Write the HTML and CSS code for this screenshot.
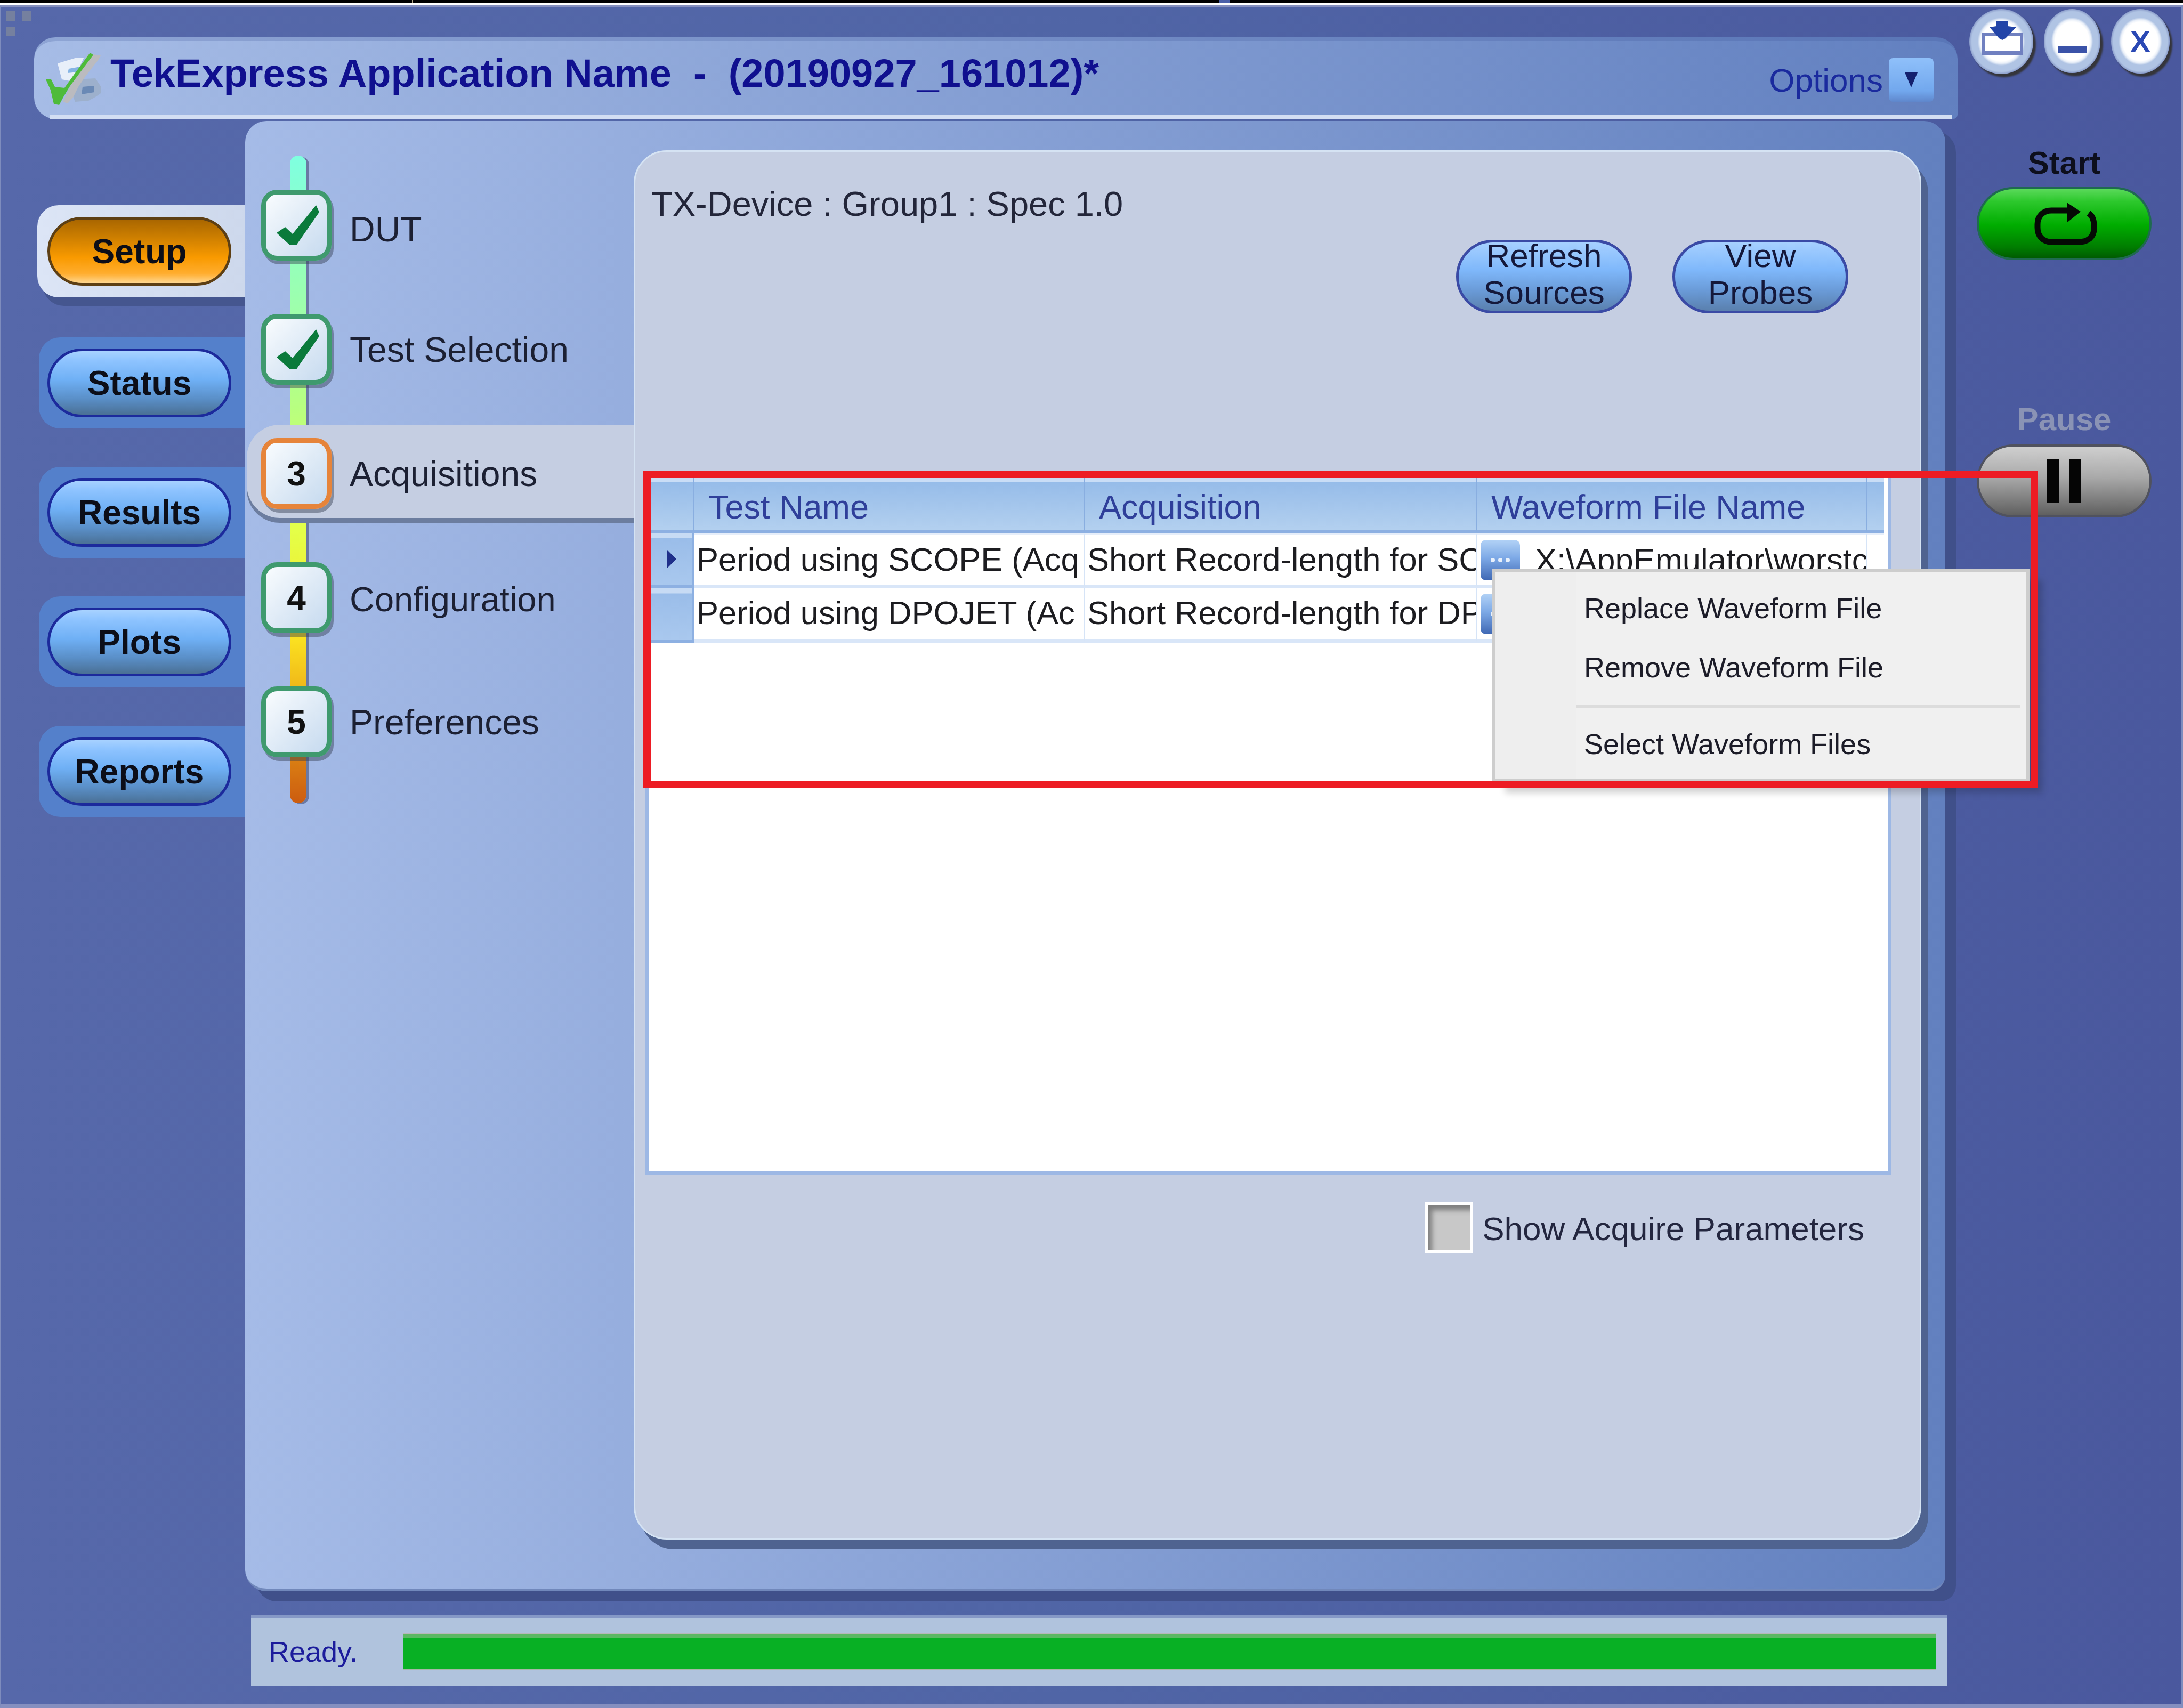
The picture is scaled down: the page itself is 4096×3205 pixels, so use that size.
FILE: index.html
```html
<!DOCTYPE html>
<html lang="en">
<head>
<meta charset="utf-8">
<title>TekExpress Application Name</title>
<link rel="stylesheet" href="styles.css">
</head>
<body>
<div class="topline">
  <span class="seg seg-a"></span><span class="tick"></span><span class="seg seg-b"></span><span class="gap"></span><span class="seg seg-c"></span>
</div>
<div class="window">
  <svg class="sysmark" viewBox="0 0 46 46"><rect x="0" y="0" width="17" height="18"/><rect x="29" y="0" width="17" height="18"/><rect x="0" y="29" width="17" height="18"/></svg>
  <div class="main">
    <header class="titlebar">
      <svg class="logo" viewBox="0 0 110 106">
        <path class="logo-sheet" d="M27 22 L60 12 L76 12 L56 56 L35 52Z"/>
        <path class="logo-accent" d="M48 32 L70 28 L66 38 L46 40Z"/>
        <path class="logo-blob" d="M62 52 L98 50 L108 65 L108 78 L98 85 L85 92 L60 94 L54 78Z"/>
        <path class="logo-dark" d="M74 66 L95 64 L96 76 L72 80Z"/>
        <path class="logo-gray" d="M85 4 L108 7 L103 16 L78 48 L66 66 L56 86 L46 97 L37 94 L48 70 L70 30Z"/>
        <path class="logo-check" d="M5 52 L15 52 L22 66 L40 68 L60 40 L88 2 L94 6 L70 38 L50 65 L38 85 L30 100 L20 98 L14 72Z"/>
      </svg>
      <h1 class="apptitle">TekExpress Application Name  -  (20190927_161012)*</h1>
      <div class="options"><span class="options-label">Options</span><span class="options-drop"><svg viewBox="0 0 24 28"><path d="M0 0H24L12 28Z"/></svg></span></div>
    </header>
    <div class="workspace">
      <nav class="tabs">
        <div class="tab tab-active"><div class="pill pill-orange">Setup</div></div>
        <div class="tab"><div class="pill">Status</div></div>
        <div class="tab"><div class="pill">Results</div></div>
        <div class="tab"><div class="pill">Plots</div></div>
        <div class="tab"><div class="pill">Reports</div></div>
      </nav>
      <section class="panel">
        <div class="steps">
          <div class="rail"></div>
          <div class="step"><div class="stepbox"><svg class="check" viewBox="0 0 80 76"><path d="M0 52 L16 41 L30 54 L74 0 L80 13 L37 75 L25 75Z"/></svg></div><span class="steplabel steplabel-low">DUT</span></div>
          <div class="step"><div class="stepbox"><svg class="check" viewBox="0 0 80 76"><path d="M0 52 L16 41 L30 54 L74 0 L80 13 L37 75 L25 75Z"/></svg></div><span class="steplabel">Test Selection</span></div>
          <div class="step step-current"><div class="stepbox stepbox-current">3</div><span class="steplabel">Acquisitions</span></div>
          <div class="step"><div class="stepbox">4</div><span class="steplabel steplabel-narrow">Configuration</span></div>
          <div class="step"><div class="stepbox">5</div><span class="steplabel">Preferences</span></div>
        </div>
        <div class="content">
          <div class="heading">TX-Device : Group1 : Spec 1.0</div>
          <div class="actions">
            <div class="softbtn"><span class="softbtn-text">Refresh<br>Sources</span></div>
            <div class="softbtn"><span class="softbtn-text">View<br>Probes</span></div>
          </div>
          <div class="table">
            <div class="row row-head">
              <div class="hcell hcell-corner"></div>
              <div class="hcell">Test Name</div>
              <div class="hcell">Acquisition</div>
              <div class="hcell">Waveform File Name</div>
              <div class="hcell hcell-end"></div>
            </div>
            <div class="row row-first">
              <div class="rowhead"><svg class="caret" viewBox="0 0 18 36"><path d="M0 0 L18 18 L0 36Z"/></svg></div>
              <div class="cell">Period using SCOPE (Acq</div>
              <div class="cell">Short Record-length for SC</div>
              <div class="cell cell-file"><span class="browse"><svg viewBox="0 0 40 10"><circle cx="6" cy="5" r="4"/><circle cx="20" cy="5" r="4"/><circle cx="34" cy="5" r="4"/></svg></span><span class="filename">X:\AppEmulator\worstc</span></div>
              <div class="cell cell-end"></div>
            </div>
            <div class="row">
              <div class="rowhead"></div>
              <div class="cell">Period using DPOJET (Ac</div>
              <div class="cell">Short Record-length for DP</div>
              <div class="cell cell-file"><span class="browse"><svg viewBox="0 0 40 10"><circle cx="6" cy="5" r="4"/><circle cx="20" cy="5" r="4"/><circle cx="34" cy="5" r="4"/></svg></span></div>
              <div class="cell cell-end"></div>
            </div>
            <div class="menu">
              <div class="menuitem">Replace Waveform File</div>
              <div class="menuitem">Remove Waveform File</div>
              <div class="menusep"></div>
              <div class="menuitem">Select Waveform Files</div>
            </div>
          </div>
          <label class="showparams"><span class="checkbox"></span><span class="showparams-text">Show Acquire Parameters</span></label>
          <div class="callout"></div>
        </div>
      </section>
    </div>
    <footer class="statusbar">
      <span class="ready">Ready.</span>
      <div class="progress"></div>
    </footer>
  </div>
  <aside class="side">
    <div class="winbtns">
      <div class="winbtn winbtn-a">
        <svg viewBox="0 0 120 122"><rect class="tray" x="27" y="48" width="71" height="34"/><rect class="tray-base" x="24" y="78" width="77" height="8"/><path class="tray-arrow" d="M51 23 H72 V32 L88 34 L68 55 L62 58 L56 55 L38 34 L51 32Z"/></svg>
      </div>
      <div class="winbtn winbtn-b">
        <svg viewBox="0 0 106 120"><rect class="minus" x="27" y="69" width="53" height="13"/></svg>
      </div>
      <div class="winbtn winbtn-c">X</div>
    </div>
    <div class="runlabel runlabel-start">Start</div>
    <div class="runbtn runbtn-start">
      <svg class="loop" viewBox="0 0 125 85"><path class="loop-line" d="M108 23 C115 28 118 36 118 46 V52 C118 68 106 77 90 77 H38 C22 77 12 66 12 50 V44 C12 29 22 18 38 18 H70"/><path class="loop-head" d="M67 3 L93 20 L67 41Z"/></svg>
    </div>
    <div class="runlabel runlabel-pause">Pause</div>
    <div class="runbtn runbtn-pause"><span class="pausebar"></span><span class="pausebar"></span></div>
  </aside>
</div>
</body>
</html>
```
FILE: styles.css
```css
* { box-sizing: border-box; }
html, body { margin: 0; padding: 0; }
body {
  width: 4096px;
  height: 3205px;
  overflow: hidden;
  background: #fff;
  font-family: "Liberation Sans", Arial, sans-serif;
  color: #1c2033;
}
.topline { display: flex; height: 9px; background: #fff; }
.topline .seg { height: 5px; background: #000; }
.seg-a { width: 773px; }
.seg-b { width: 1512px; }
.seg-c { flex: 1; }
.tick { width: 2px; height: 5px; background: #b5a98a; }
.gap { width: 21px; height: 5px; background: #4a5fa8; }

.window {
  position: relative;
  display: grid;
  grid-template-columns: 3671px 1fr;
  height: 3196px;
  border-top: 4px solid #858fbf;
  border-left: 2px solid #7e8cbd;
  border-right: 3px solid #7e8cbd;
  border-bottom: 8px solid #858fbf;
  background: linear-gradient(90deg, #5668aa, #5065a6 50%, #4a589e);
}
.sysmark { position: absolute; left: 10px; top: 8px; width: 46px; height: 46px; fill: #75809f; }

.main { padding: 57px 0 0 62px; display: flex; flex-direction: column; }
.titlebar {
  position: relative;
  display: flex;
  align-items: center;
  height: 153px;
  padding: 0 45px 0 17px;
  background: linear-gradient(90deg, #a6bce6, #6280c0);
  border-top: 7px solid rgba(60, 80, 150, .22);
  border-radius: 40px 40px 8px 40px;
}
.titlebar::after {
  content: "";
  position: absolute;
  left: 30px;
  right: 10px;
  bottom: 0;
  height: 7px;
  background: #d3def3;
}
.logo { width: 110px; height: 106px; flex: none; }
.logo-sheet { fill: #e8eff9; }
.logo-accent { fill: #86b4e4; }
.logo-blob { fill: #9db0cc; }
.logo-dark { fill: #6a89b5; }
.logo-gray { fill: #bbbbbf; }
.logo-check { fill: #4ebb3a; }
.apptitle {
  margin: 0 0 24px 16px;
  font-size: 74px;
  line-height: 90px;
  font-weight: 700;
  color: #10108f;
  white-space: pre;
  flex: 1;
}
.options { display: flex; align-items: center; gap: 11px; }
.options-label { font-size: 62px; color: #1a2a9e; }
.options-drop {
  display: flex;
  align-items: center;
  justify-content: center;
  width: 84px;
  height: 82px;
  border-radius: 8px;
  background: linear-gradient(#8fc0fa, #72a8ee 75%, #5f87cc);
}
.options-drop svg { width: 24px; height: 28px; fill: #14206e; }

.workspace { display: flex; margin-top: 4px; height: 2759px; }
.tabs {
  width: 396px;
  flex: none;
  display: flex;
  flex-direction: column;
  gap: 72px;
  padding-top: 158px;
}
.tab {
  display: flex;
  align-items: center;
  height: 171px;
  margin-left: 9px;
  padding-left: 16px;
  background: #5480cb;
  border-radius: 40px 0 0 40px;
}
.tab-active {
  height: 173px;
  margin-left: 6px;
  margin-bottom: 3px;
  padding-left: 19px;
  background: linear-gradient(90deg, #dce5f6, #cdd8ec);
  box-shadow: 10px 16px 0 #45568f;
}
.pill {
  display: flex;
  align-items: center;
  justify-content: center;
  width: 345px;
  height: 129px;
  border: 5px solid #1c2a9c;
  border-radius: 65px;
  font-size: 64px;
  font-weight: 700;
  color: #0c0e18;
  background: linear-gradient(#a8d2ff, #8fc4ff 14%, #6fb0f5 45%, #5a8fc8 75%, #4a7095);
}
.pill-orange {
  border-color: #5d3f14;
  background: linear-gradient(#a96600, #c97c00 25%, #f99a00 60%, #ffad2e 85%, #ffd68e);
}

.panel {
  display: flex;
  flex: 1;
  margin-right: 23px;
  background: linear-gradient(90deg, #a5bbe7, #6280bf);
  border-bottom: 5px solid #7188bb;
  border-radius: 40px 40px 30px 40px;
  box-shadow: 20px 19px 0 #40508a;
}
.steps {
  position: relative;
  width: 729px;
  flex: none;
  display: flex;
  flex-direction: column;
  gap: 100px;
  padding: 129px 0 0 30px;
}
.rail {
  position: absolute;
  left: 84px;
  top: 65px;
  width: 31px;
  height: 1215px;
  border-radius: 16px;
  background: linear-gradient(#7fffe0, #a0ffa8 25%, #b8ff80 39%, #e4ff48 58%, #fadf20 75%, #efb318 83%, #cc5c10);
  box-shadow: 5px 2px 0 rgba(60, 70, 110, .55);
}
.step { position: relative; display: flex; align-items: center; gap: 34px; height: 133px; }
.step-current::before {
  content: "";
  position: absolute;
  left: -27px;
  right: 0;
  top: -25px;
  bottom: -17px;
  background: #c5cee2;
  border-radius: 62px 0 0 62px;
  box-shadow: 0 9px 0 #6c7d9f;
}
.stepbox {
  position: relative;
  display: flex;
  align-items: center;
  justify-content: center;
  flex: none;
  width: 132px;
  height: 133px;
  border: 9px solid #3f9a6e;
  border-radius: 30px;
  background: linear-gradient(135deg, #f9fcfe, #c6daef);
  box-shadow: 4px 7px 0 rgba(50, 60, 80, .45);
  font-size: 64px;
  font-weight: 700;
  color: #111;
}
.stepbox-current { border-color: #e6843a; }
.check { width: 80px; height: 76px; fill: #0a7a3b; margin-left: 6px; }
.steplabel { position: relative; font-size: 66px; color: #1c2033; }
.steplabel-low { padding-top: 14px; }
.steplabel-narrow { font-size: 65px; padding-top: 6px; }

.content {
  position: relative;
  flex: 1;
  display: flex;
  flex-direction: column;
  margin: 55px 45px 92px 0;
  padding: 59px 0 0 19px;
  background: #c5cee2;
  border: 3px solid #d5e3f3;
  border-radius: 62px;
  box-shadow: 13px 18px 0 #4f6390;
}
.heading { margin-left: 11px; font-size: 65px; line-height: 78px; color: #23263a; }
.actions { display: flex; justify-content: flex-end; gap: 76px; margin: 28px 134px 0 0; }
.softbtn {
  width: 330px;
  height: 138px;
  border: 5px solid #3a4aa5;
  border-radius: 69px;
  text-align: center;
  font-size: 62px;
  line-height: 69px;
  color: #14183a;
  background: linear-gradient(#a6d0ff, #7fb8fb 40%, #6a9bd8 70%, #5a80ae);
}
.softbtn-text { display: block; margin-top: -10px; }

.table {
  position: relative;
  width: 2337px;
  height: 1317px;
  margin-top: 300px;
  background: #fff;
  border: 6px solid #9db8e5;
  border-bottom-width: 7px;
}
.row { display: grid; grid-template-columns: 86px 733px 736px 732px 31px; height: 102px; }
.row-head { height: 106px; }
.row-first { height: 104px; }
.hcell {
  padding: 8px 0 0 26px;
  font-size: 63px;
  line-height: 98px;
  color: #2f3f9a;
  white-space: nowrap;
  overflow: hidden;
  background: linear-gradient(#c9ddf6 0, #c9ddf6 10px, #96bce9 11px, #b3d0ef 100%);
  border-right: 3px solid #89aee0;
  border-bottom: 5px solid #8db0e2;
}
.hcell-end { border-right: 0; }
.rowhead {
  display: flex;
  align-items: center;
  justify-content: center;
  background: linear-gradient(#c7dbf4 0, #c7dbf4 9px, #9abde9 10px, #a9c8ee 100%);
  border-bottom: 6px solid #8db0e2;
  border-right: 4px solid #8db0e2;
}
.caret { width: 18px; height: 36px; fill: #1f2f8a; margin-left: 4px; }
.cell {
  padding-left: 4px;
  font-size: 61.5px;
  line-height: 92px;
  color: #1c1c20;
  white-space: nowrap;
  overflow: hidden;
  border-right: 3px solid #d6e4f7;
  border-bottom: 7px solid #d9e6f8;
  min-width: 0;
}
.row-first .cell { border-top: 4px solid #e6eefa; }
.cell-file { display: flex; align-items: center; gap: 28px; padding-left: 6px; }
.cell-end { border-right: 0; padding: 0; }
.browse {
  display: flex;
  align-items: center;
  justify-content: center;
  flex: none;
  width: 74px;
  height: 76px;
  border-radius: 10px;
  background: linear-gradient(#b2d2f6, #7da9e6 45%, #3f68b4);
}
.browse svg { width: 40px; height: 10px; fill: #e8f0fb; }
.filename { overflow: hidden; }

.menu {
  position: absolute;
  left: 1583px;
  top: 174px;
  width: 1008px;
  height: 400px;
  padding-top: 13px;
  background: linear-gradient(90deg, #eeeeee 151px, #f0f0f0 151px);
  border: 6px solid #cdcdcd;
  border-top-width: 5px;
  box-shadow: 24px 20px 12px rgba(0, 0, 0, .18);
}
.menuitem { padding-left: 166px; font-size: 54px; line-height: 111px; color: #1c1c28; white-space: nowrap; }
.menusep { height: 6px; margin: 15px 11px 12px 151px; background: #dcdcdc; }

.showparams {
  display: flex;
  align-items: center;
  justify-content: flex-end;
  gap: 17px;
  margin: 50px 104px 0 0;
  font-size: 62px;
  color: #23263f;
}
.showparams-text { padding-top: 4px; }
.checkbox {
  width: 91px;
  height: 97px;
  border: 6px solid #fff;
  background: #c8c8c8;
  box-shadow: inset 14px 16px 10px -6px #7f7f7f;
}
.callout {
  position: absolute;
  left: 15px;
  top: 598px;
  width: 2617px;
  height: 596px;
  border: 14px solid #ed1c24;
  pointer-events: none;
}

.statusbar {
  display: flex;
  align-items: center;
  height: 134px;
  width: 3182px;
  margin: 44px 0 0 407px;
  padding: 0 20px 0 33px;
  background: #b0c3dd;
  border-top: 7px solid #8598c6;
}
.ready { width: 253px; flex: none; font-size: 54px; color: #1c1c9c; margin-top: -4px; }
.progress {
  flex: 1;
  height: 64px;
  margin-top: -4px;
  background: #08b024;
  border-top: 6px solid #5bb863;
  box-shadow: 0 -3px 0 #b8b8b8, 0 3px 0 #a8b8a8;
}

.side { display: flex; flex-direction: column; padding: 4px 0 0 22px; }
.winbtns { display: flex; align-items: flex-start; gap: 20px; }
.winbtn {
  display: flex;
  align-items: center;
  justify-content: center;
  border-radius: 50%;
  background: radial-gradient(closest-side, #fff 60%, #eaf0f9 67%, #b0c4e4 74%, #b0c4e4 92%, #8c9ecb 100%);
  box-shadow: 5px 6px 3px #35353a;
}
.winbtn svg { width: 100%; height: 100%; }
.winbtn-a { width: 120px; height: 122px; }
.winbtn-b { width: 106px; height: 120px; }
.winbtn-c { width: 110px; height: 121px; font-size: 56px; font-weight: 700; color: #2a48b4; }
.tray { fill: #fff; stroke: #7080c0; stroke-width: 6px; }
.tray-base { fill: #7080c0; }
.tray-arrow { fill: #2244a8; }
.minus { fill: #3a52a8; }

.runlabel { width: 328px; margin-left: 14px; text-align: center; font-size: 60px; line-height: 60px; font-weight: 700; }
.runlabel-start { margin-top: 137px; color: #0d0f1c; }
.runlabel-pause { margin-top: 269px; color: #8a93b5; }
.runbtn {
  display: flex;
  align-items: center;
  justify-content: center;
  width: 328px;
  height: 137px;
  margin: 17px 0 0 14px;
  border-radius: 69px;
  border: 4px solid #1f6a50;
}
.runbtn-start {
  margin-top: 15px;
  background: linear-gradient(#5ad95a, #2cc82c 18%, #00ad00 52%, #007c00 85%, #005c00);
}
.runbtn-pause {
  gap: 20px;
  border-color: #50525e;
  background: linear-gradient(#cfcfcf, #a9a9a9 45%, #5f5f5f);
}
.loop { width: 125px; height: 85px; }
.loop-line { fill: none; stroke: #050a05; stroke-width: 11px; }
.loop-head { fill: #050a05; }
.pausebar { width: 22px; height: 82px; background: #050505; }
```
